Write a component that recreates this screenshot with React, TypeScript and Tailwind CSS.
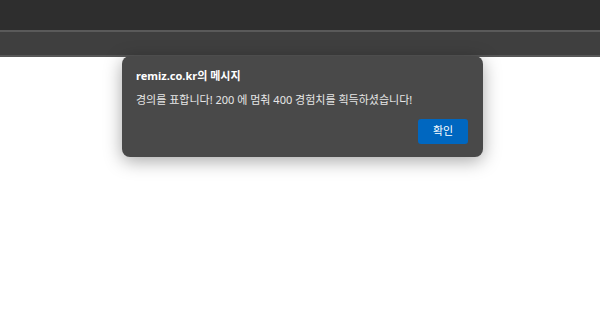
export default function App() {
  return (
    <div
      className="relative w-[600px] h-[314px] bg-white overflow-hidden"
      style={{ fontFamily: '"Noto Sans", "Noto Sans CJK KR", sans-serif' }}
    >
      <div className="h-[30px] bg-[#2e2e2e]" />
      <div className="h-[2px] bg-[#5a5a5a]" />
      <div className="h-[23px] bg-[#3f3f3f]" />
      <div className="h-[2px] bg-[#575757]" />

      <div className="absolute top-[56px] left-[122px] w-[361px] h-[101px] rounded-[8px] bg-[#494949] shadow-[0_4px_18px_rgba(0,0,0,0.35)] pt-[12px] pl-[14px] pr-[15px] flex flex-col">
        <div className="text-[11px] leading-[16px] font-bold text-white">
          remiz.co.kr의 메시지
        </div>
        <div className="mt-[8px] text-[11px] leading-[16px] text-[#e6e6e6]">
          경의를 표합니다! 200 에 멈춰 400 경험치를 획득하셨습니다!
        </div>
        <div className="mt-[11px] flex justify-end">
          <button className="w-[50px] h-[25px] rounded-[3px] bg-[#0067c0] text-[11px] text-white">
            확인
          </button>
        </div>
      </div>
    </div>
  );
}
